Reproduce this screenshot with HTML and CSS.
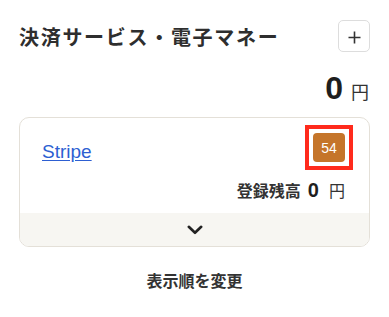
FILE: index.html
```html
<!DOCTYPE html>
<html lang="ja">
<head>
<meta charset="utf-8">
<title>決済サービス・電子マネー</title>
<link rel="stylesheet" href="styles.css">
</head>
<body>
<section class="panel">
  <header class="panel-head">
    <h2 class="panel-title">決済サービス・電子マネー</h2>
    <button class="add-btn" type="button" aria-label="追加">
      <svg width="13" height="13" viewBox="0 0 13 13" aria-hidden="true">
        <path d="M6.5 0.5V12.5M0.5 6.5H12.5" stroke="#333" stroke-width="1.6" fill="none"/>
      </svg>
    </button>
  </header>
  <div class="total">
    <span class="total-num">0</span><span class="total-unit">円</span>
  </div>
  <div class="card">
    <div class="card-body">
      <div class="card-row">
        <a class="service-link" href="#">Stripe</a>
        <span class="badge-frame"><span class="badge">54</span></span>
      </div>
      <div class="balance">
        <span class="balance-label">登録残高</span><span class="balance-num">0</span><span class="balance-unit">円</span>
      </div>
    </div>
    <div class="card-foot">
      <svg width="16" height="10" viewBox="0 0 16 10" aria-hidden="true">
        <path d="M1.8 1.8L8 7.8L14.2 1.8" stroke="#222" stroke-width="2.6" fill="none" stroke-linecap="round" stroke-linejoin="round"/>
      </svg>
    </div>
  </div>
  <div class="reorder">表示順を変更</div>
</section>
</body>
</html>
```
FILE: styles.css
```css
* { box-sizing: border-box; }

html, body {
  margin: 0;
  padding: 0;
  background: #ffffff;
}

body {
  font-family: "Liberation Sans", "Noto Sans CJK JP", sans-serif;
  color: #333333;
}

.panel {
  padding: 20px 19px 0 19px;
  width: 389px;
}

.panel-head {
  display: flex;
  align-items: center;
  justify-content: space-between;
  height: 32px;
}

.panel-title {
  margin: 0;
  font-family: "Noto Sans CJK JP", sans-serif;
  font-size: 20px;
  font-weight: 700;
  letter-spacing: 1.7px;
  line-height: 32px;
  color: #2e2e2e;
  margin-top: 1px;
}

.add-btn {
  width: 32px;
  height: 32px;
  margin: 0;
  padding: 3px 0 0 0;
  border: 1px solid #dddddd;
  border-radius: 5px;
  background: #ffffff;
  display: flex;
  align-items: center;
  justify-content: center;
}

.total {
  display: flex;
  justify-content: flex-end;
  align-items: baseline;
  margin-top: 16px;
  height: 40px;
  line-height: 40px;
  padding-right: 1px;
}

.total-num {
  font-size: 32px;
  font-weight: 700;
  color: #1e1e1e;
}

.total-unit {
  font-family: "Noto Sans CJK JP", sans-serif;
  font-size: 18px;
  margin-left: 8px;
  color: #333333;
  line-height: 40px;
}

.card {
  margin-top: 9px;
  border: 1px solid #e4e0d8;
  border-radius: 10px;
  overflow: hidden;
  width: 351px;
}

.card-body {
  padding: 15px 24px 11px 22px;
}

.card-row {
  display: flex;
  align-items: center;
  justify-content: space-between;
  height: 29px;
}

.service-link {
  font-size: 19px;
  color: #2d5fd2;
  text-decoration: underline;
  text-underline-offset: 2px;
  margin-top: 9px;
  line-height: 22px;
}

.badge-frame {
  display: inline-flex;
  margin: -8px;
  padding: 4px;
  border: 4px solid #ff2a1c;
}

.badge {
  display: flex;
  align-items: center;
  justify-content: center;
  width: 32px;
  height: 29px;
  border-radius: 4px;
  background: #c5752a;
  color: #ffffff;
  font-size: 14px;
}

.balance {
  display: flex;
  justify-content: flex-end;
  align-items: baseline;
  margin-top: 16px;
  height: 24px;
  line-height: 24px;
}

.balance-label {
  font-family: "Noto Sans CJK JP", sans-serif;
  font-size: 16px;
  font-weight: 700;
  color: #333333;
}

.balance-num {
  font-size: 20px;
  font-weight: 700;
  margin-left: 7px;
  color: #1e1e1e;
}

.balance-unit {
  font-family: "Noto Sans CJK JP", sans-serif;
  font-size: 16px;
  margin-left: 10px;
  color: #333333;
}

.card-foot {
  height: 33px;
  background: #f7f6f2;
  display: flex;
  align-items: center;
  justify-content: center;
  padding-top: 1px;
}

.reorder {
  margin-top: 21px;
  text-align: center;
  font-family: "Noto Sans CJK JP", sans-serif;
  font-size: 16px;
  font-weight: 700;
  line-height: 24px;
  color: #333333;
  width: 351px;
}
```
